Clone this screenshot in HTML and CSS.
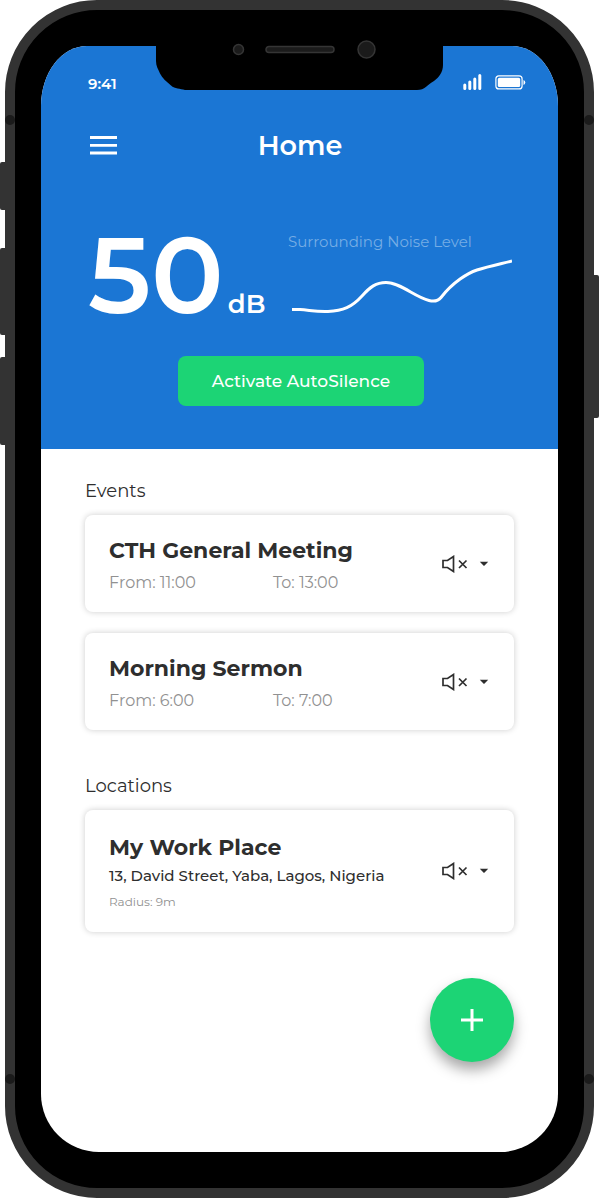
FILE: index.html
```html
<!DOCTYPE html>
<html lang="en">
<head>
<meta charset="utf-8">
<meta name="viewport" content="width=device-width, initial-scale=1">
<title>Home</title>
<link rel="stylesheet" href="styles.css">
</head>
<body>
<svg class="symbols" aria-hidden="true">
  <symbol id="mute" viewBox="0 0 26 18">
    <path d="M1 5.500h4.500L11.500 1.500v15L5.500 12.500H1z" fill="none" stroke="currentColor" stroke-width="1.700"/>
    <path d="M17 5.500l7.500 7.500M24.500 5.500l-7.500 7.500" fill="none" stroke="currentColor" stroke-width="1.700"/>
  </symbol>
  <symbol id="caret" viewBox="0 0 10 6">
    <path d="M.8 .8h8.400L5.600 4.600q-.6.5-1.200 0z" fill="currentColor"/>
  </symbol>
</svg>
<div class="device">
  <span class="key key-silent"></span>
  <span class="key key-up"></span>
  <span class="key key-down"></span>
  <span class="key key-power"></span>
  <span class="seam seam-tl"></span>
  <span class="seam seam-tr"></span>
  <span class="seam seam-bl"></span>
  <span class="seam seam-br"></span>
  <svg class="notch" viewBox="0 0 288 46" aria-hidden="true">
    <path d="M0-1h287v20c0 7-4 12.500-9 16-7 4-9 9-17 9H29c-5-1.500-10-1-14-4.500C11 36 6 32 4 27.500 2 23 0 20 0 15z" fill="#000"/>
    <circle cx="82.500" cy="3.500" r="5" fill="#1b1b1b" stroke="#353535" stroke-width="1.500"/>
    <rect x="110" y=".5" width="68" height="6" rx="3" fill="#1b1b1b" stroke="#353535" stroke-width="1.500"/>
    <circle cx="210.500" cy="3.500" r="8.500" fill="#1b1b1b" stroke="#353535" stroke-width="1.500"/>
  </svg>
  <main class="screen">
    <header class="hero">
      <div class="status">
        <span class="time">9:41</span>
        <svg class="signal" viewBox="0 0 19 17" aria-hidden="true">
          <path d="M1.800 11v3.500M6.800 8v6.500M11.800 5v9.500M16.800 1.500v13" stroke="#fff" stroke-width="3" stroke-linecap="round"/>
        </svg>
        <svg class="battery" viewBox="0 0 31 15" aria-hidden="true">
          <rect x=".9" y=".9" width="26.200" height="13" rx="3" fill="none" stroke="#fff" stroke-width="1.200"/>
          <rect x="2.800" y="2.800" width="22.400" height="9.200" rx="1.600" fill="#fff"/>
          <path d="M28.500 5v5q1.800-.6 1.800-2.500T28.500 5z" fill="#fff"/>
        </svg>
      </div>
      <nav class="bar">
        <button class="menu" type="button" aria-label="Menu">
          <svg viewBox="0 0 29 20" aria-hidden="true"><path d="M2 1.500h27M2 9.300h27M2 17h27" stroke="#fff" stroke-width="2.800"/></svg>
        </button>
        <h1 class="title">Home</h1>
      </nav>
      <div class="meter">
        <p class="reading"><span class="value">50</span><span class="unit">dB</span></p>
        <div class="chart">
          <p class="caption">Surrounding Noise Level</p>
          <svg class="line" viewBox="0 0 220 56" aria-hidden="true">
            <path d="M0 50.500h8C17 51 24 53 36 52.500 51 52 60 48 70 37 78 28 84 23.500 94 23.500 108 23.500 123 38 137 41.500q8 2 12-3C161 23 176 14 185 11c11-3.500 23-6 35-9" fill="none" stroke="#fff" stroke-width="3"/>
          </svg>
        </div>
      </div>
      <button class="activate" type="button">Activate AutoSilence</button>
    </header>
    <section class="group">
      <h2 class="heading">Events</h2>
      <article class="card">
        <div class="info">
          <h3 class="name">CTH General Meeting</h3>
          <p class="times"><span>From: 11:00</span><span>To: 13:00</span></p>
        </div>
        <button class="mode" type="button" aria-label="Sound mode for CTH General Meeting"><svg class="mute"><use href="#mute"/></svg><svg class="caret"><use href="#caret"/></svg></button>
      </article>
      <article class="card">
        <div class="info">
          <h3 class="name">Morning Sermon</h3>
          <p class="times"><span>From: 6:00</span><span>To: 7:00</span></p>
        </div>
        <button class="mode" type="button" aria-label="Sound mode for Morning Sermon"><svg class="mute"><use href="#mute"/></svg><svg class="caret"><use href="#caret"/></svg></button>
      </article>
    </section>
    <section class="group places">
      <h2 class="heading">Locations</h2>
      <article class="card tall">
        <div class="info">
          <h3 class="name">My Work Place</h3>
          <p class="address">13, David Street, Yaba, Lagos, Nigeria</p>
          <p class="radius">Radius: 9m</p>
        </div>
        <button class="mode" type="button" aria-label="Sound mode for My Work Place"><svg class="mute"><use href="#mute"/></svg><svg class="caret"><use href="#caret"/></svg></button>
      </article>
    </section>
    <button class="add" type="button" aria-label="Add">
      <svg viewBox="0 0 22 22" aria-hidden="true"><path d="M11 0v22M0 11h22" stroke="#fff" stroke-width="3"/></svg>
    </button>
  </main>
</div>
</body>
</html>
```
FILE: styles.css
```css
* { box-sizing: border-box; }
body {
  margin: 0;
  background: #fff;
  color: #2e2e2e;
  font-family: Montserrat, Inter, "Open Sans", sans-serif;
}
h1, h2, h3, p { margin: 0; }
button {
  padding: 0;
  border: 0;
  background: none;
  color: inherit;
  font: inherit;
  cursor: pointer;
}
svg { display: block; }
.symbols { position: absolute; width: 0; height: 0; }

/* Phone body */
.device {
  position: relative;
  display: flex;
  min-height: 100vh;
  margin: 0 5px;
  padding: 36px 26px;
  border: 10px solid #333;
  border-radius: 92px;
  background: #000;
}
.key { position: absolute; left: -15px; width: 6px; background: #333; border-radius: 2px 0 0 2px; }
.key-silent { top: 152px; height: 48px; }
.key-up { top: 238px; height: 87px; }
.key-down { top: 347px; height: 88px; }
.key-power { top: 265px; right: -15px; left: auto; height: 143px; border-radius: 0 2px 2px 0; }
.seam { position: absolute; width: 10px; height: 10px; border-radius: 50%; background: #1b1b1b; }
.seam-tl, .seam-bl { left: -10px; }
.seam-tr, .seam-br { right: -10px; }
.seam-tl, .seam-tr { top: 105px; }
.seam-bl, .seam-br { bottom: 104px; }
.notch {
  position: absolute;
  top: 36px;
  left: 50%;
  width: 288px;
  height: 46px;
  margin-left: -144px;
  overflow: visible;
}

/* Screen */
.screen {
  display: flex;
  flex: 1;
  flex-direction: column;
  border-radius: 46px 46px 58px 58px / 60px 60px 58px 58px;
  background: #fff;
  overflow: hidden;
}
.hero {
  display: flex;
  flex-direction: column;
  padding: 28px 32px 43px 47px;
  background: #1b76d4;
  color: #fff;
}
.status { display: flex; align-items: flex-start; height: 20px; }
.time { flex: 1; font-size: 15px; font-weight: 600; line-height: 20px; }
.signal { width: 19px; height: 17px; margin-right: 13px; }
.battery { width: 31px; height: 15px; margin-top: 1px; }
.bar {
  display: grid;
  grid-template-columns: 29px 1fr 29px;
  align-items: center;
  margin: 34px 14px 0 0;
}
.menu svg { width: 29px; height: 20px; }
.title { font-size: 27px; font-weight: 600; line-height: 36px; text-align: center; }
.meter { display: flex; justify-content: space-between; margin: 66px 14px 0 0; }
.reading { display: flex; align-items: baseline; gap: 4px; }
.value { font-size: 108px; font-weight: 600; line-height: 88px; }
.unit { font-size: 26px; font-weight: 600; line-height: 32px; }
.chart { flex: none; width: 224px; }
.caption { color: #76ade5; font-size: 15px; font-weight: 400; line-height: 24px; white-space: nowrap; }
.line { width: 220px; height: 56px; margin: 5px 0 0 4px; }
.activate {
  align-self: center;
  min-width: 246px;
  height: 50px;
  margin: 36px 12px 0 0;
  border-radius: 8px;
  background: #1cd475;
  font-size: 17px;
  font-weight: 500;
}

.group { display: flex; flex-direction: column; gap: 21px; padding: 30px 44px 0; }
.places { padding-top: 44px; }
.heading { margin-bottom: -9px; font-size: 18px; font-weight: 400; line-height: 24px; }
.card {
  display: flex;
  align-items: center;
  justify-content: space-between;
  min-height: 97px;
  padding: 12px 25px 12px 24px;
  border-radius: 8px;
  box-shadow: 0 0 6px rgba(0, 0, 0, .2);
}
.tall { min-height: 122px; }
.info { padding-top: 6px; }
.name { font-size: 22px; font-weight: 700; line-height: 32px; }
.times { display: grid; grid-template-columns: 164px auto; color: #919191; font-size: 16px; font-weight: 400; line-height: 32px; }
.address { font-size: 15px; font-weight: 500; line-height: 24px; white-space: nowrap; }
.radius { color: #919191; font-size: 12px; font-weight: 400; line-height: 28px; }
.mode { display: flex; align-items: center; gap: 11px; height: 32px; }
.mute { width: 26px; height: 18px; }
.caret { width: 10px; height: 6px; }

.add {
  display: grid;
  align-self: flex-end;
  place-items: center;
  width: 84px;
  height: 84px;
  margin: 46px 44px 88px;
  border-radius: 50%;
  background: #1cd475;
  box-shadow: 0 8px 14px rgba(0, 0, 0, .35);
}
.add svg { width: 22px; height: 22px; }
```
